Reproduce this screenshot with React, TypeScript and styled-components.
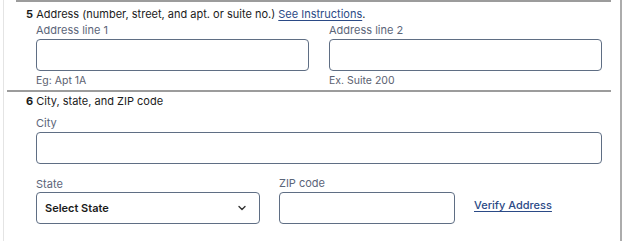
import React from "react";
import styled, { createGlobalStyle } from "styled-components";

const GlobalStyle = createGlobalStyle`
  html, body {
    margin: 0;
    padding: 0;
    background: #ffffff;
  }
  body {
    font-family: Inter, "Noto Sans", "Liberation Sans", sans-serif;
    color: #1b1b1b;
  }
`;

const Frame = styled.div`
  width: 624px;
  height: 241px;
  overflow: hidden;
  padding-left: 3px;
  box-sizing: border-box;
`;

const Panel = styled.div`
  width: 619px;
  height: 241px;
  box-sizing: border-box;
  border-left: 1px solid #e4e4e4;
  border-right: 2px solid #acacac;
  display: flex;
  flex-direction: column;
`;

const Section = styled.section<{ $inset: number }>`
  margin-left: ${p => p.$inset - 4}px;
  margin-right: 9px;
  padding-left: ${p => 26 - p.$inset}px;
  border-top: 2px solid #9c9c9c;
  box-sizing: border-box;
`;

const Heading = styled.div<{ $top: number }>`
  font-size: 11px;
  line-height: 16px;
  padding-top: ${p => p.$top}px;
  color: #1b1b1b;

  & b {
    font-weight: 700;
  }
`;

const Link = styled.a`
  color: #2b4a86;
  text-decoration: underline;
  text-underline-offset: 2px;
  cursor: pointer;
`;

const FieldRow = styled.div`
  display: grid;
  grid-template-columns: 1fr 1fr;
  column-gap: 20px;
  padding-left: 10px;
  padding-right: 9px;
`;

const Field = styled.div`
  display: flex;
  flex-direction: column;
`;

const Label = styled.label`
  font-size: 11px;
  line-height: 16px;
  color: #5b6579;
`;

const TextInput = styled.input<{ $width?: number }>`
  box-sizing: border-box;
  width: ${p => (p.$width ? `${p.$width}px` : "100%")};
  height: 32px;
  margin-top: 1px;
  border: 1px solid #5f6e84;
  border-radius: 4px;
  background: #fff;
  font: inherit;
  padding: 0 8px;
  outline: none;
`;

const Hint = styled.div`
  font-size: 10.5px;
  line-height: 13px;
  margin-top: 3px;
  margin-bottom: 3px;
  color: #5b6170;
`;

const Stack = styled.div`
  padding-left: 10px;
  margin-top: 6px;
  margin-right: 9px;
`;

const InlineRow = styled.div`
  display: flex;
  align-items: flex-end;
  gap: 19px;
  padding-left: 10px;
  margin-top: 11px;
  padding-bottom: 17px;
`;

const Select = styled.div`
  box-sizing: border-box;
  width: 224px;
  height: 32px;
  margin-top: 0;
  border: 1px solid #5f6e84;
  border-radius: 4px;
  display: flex;
  align-items: center;
  justify-content: space-between;
  padding: 0 12px 0 8px;
  font-size: 11px;
  font-weight: 600;
  color: #1b1b1b;
`;

const Chevron = styled.svg`
  width: 10px;
  height: 10px;
`;

const VerifyLink = styled(Link)`
  font-size: 11px;
  line-height: 16px;
  font-weight: 500;
  margin-bottom: 11px;
`;

const Rule = styled.div`
  margin-left: 21px;
  margin-right: 9px;
  border-top: 2px solid #9c9c9c;
`;

export default function App() {
  return (
    <>
      <GlobalStyle />
      <Frame>
        <Panel>
          <Section $inset={16}>
            <Heading $top={4}>
              <b>5</b> Address (number, street, and apt. or suite no.){" "}
              <Link>See Instructions</Link>.
            </Heading>
            <FieldRow>
              <Field>
                <Label>Address line 1</Label>
                <TextInput />
                <Hint>Eg: Apt 1A</Hint>
              </Field>
              <Field>
                <Label>Address line 2</Label>
                <TextInput />
                <Hint>Ex. Suite 200</Hint>
              </Field>
            </FieldRow>
          </Section>
          <Section $inset={7}>
            <Heading $top={1}>
              <b>6</b> City, state, and ZIP code
            </Heading>
            <Stack>
              <Field>
                <Label>City</Label>
                <TextInput />
              </Field>
            </Stack>
            <InlineRow>
              <Field>
                <Label>State</Label>
                <Select>
                  <span>Select State</span>
                  <Chevron viewBox="0 0 10 10">
                    <polyline
                      points="2,3.5 5,6.5 8,3.5"
                      fill="none"
                      stroke="#333"
                      strokeWidth="1.4"
                      strokeLinecap="round"
                      strokeLinejoin="round"
                    />
                  </Chevron>
                </Select>
              </Field>
              <Field>
                <Label>ZIP code</Label>
                <TextInput $width={176} />
              </Field>
              <VerifyLink>Verify Address</VerifyLink>
            </InlineRow>
          </Section>
          <Rule />
        </Panel>
      </Frame>
    </>
  );
}
